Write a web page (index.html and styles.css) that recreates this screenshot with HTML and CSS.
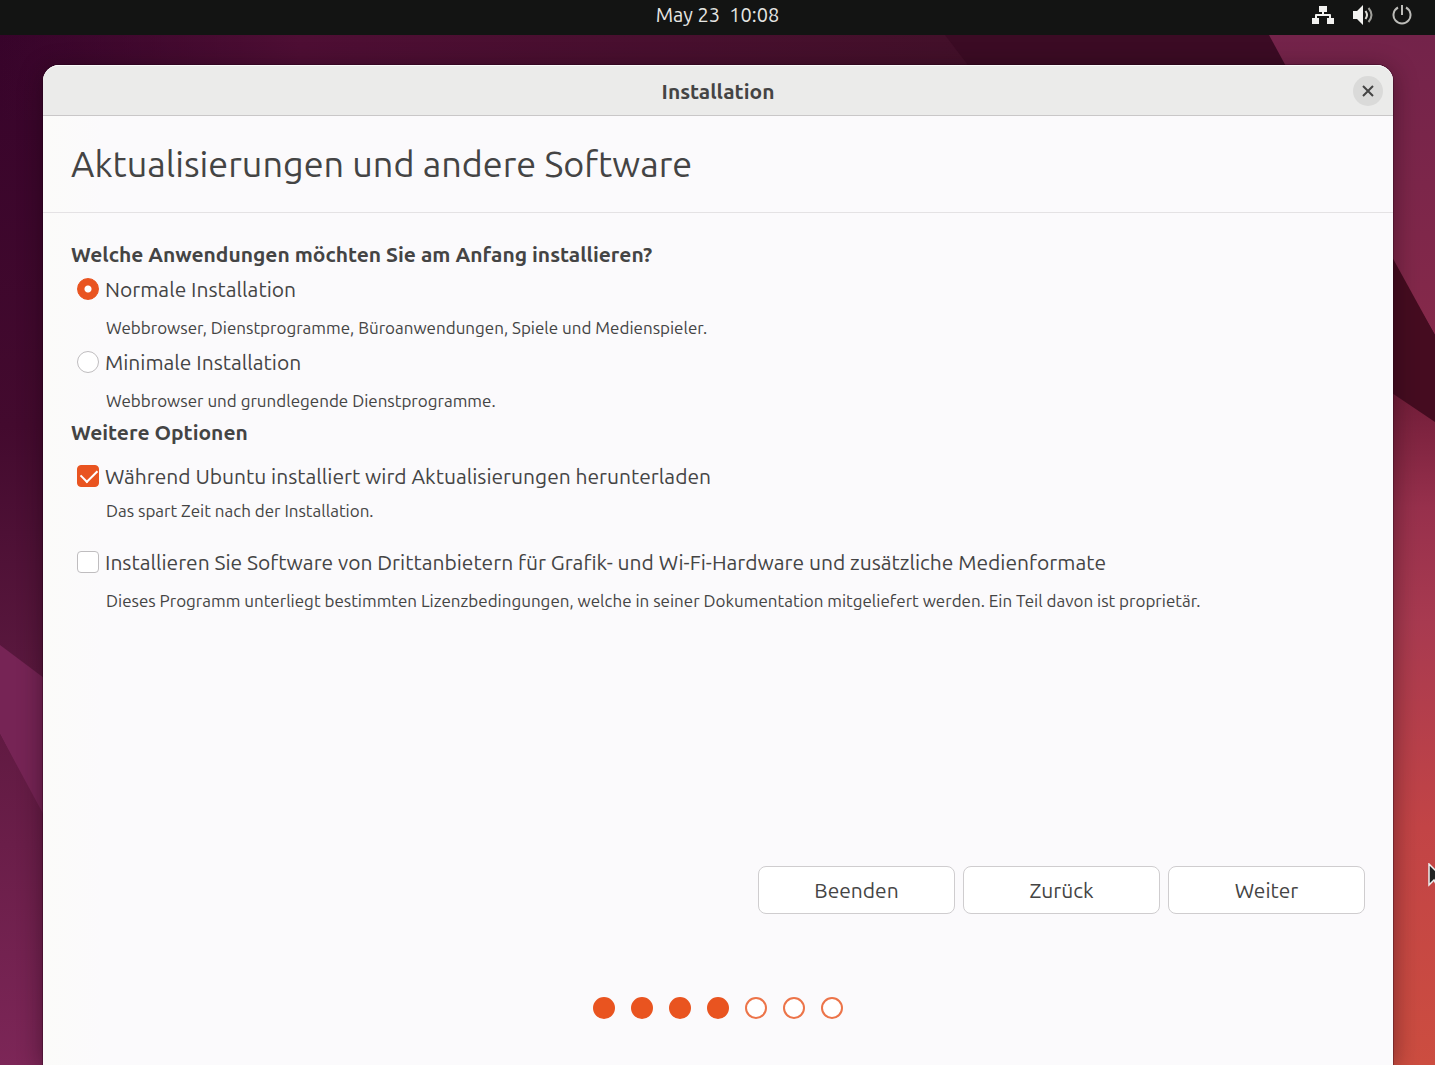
FILE: index.html
```html
<!DOCTYPE html>
<html lang="de">
<head>
<meta charset="utf-8">
<meta name="viewport" content="width=device-width, initial-scale=1">
<title>Installation</title>
<link rel="stylesheet" href="styles.css">
</head>
<body>
<svg class="wallpaper" viewBox="0 0 1435 1065" preserveAspectRatio="none" aria-hidden="true">
  <defs>
    <linearGradient id="base" x1="0" y1="0" x2="0" y2="1"><stop offset="0" stop-color="#36032a"/><stop offset=".4" stop-color="#430a2e"/><stop offset=".63" stop-color="#5a183e"/></linearGradient>
    <linearGradient id="top" x1="0" y1="0" x2="1" y2="0"><stop offset="0" stop-color="#4a0e32" stop-opacity="0"/><stop offset=".3" stop-color="#4e0e34"/><stop offset="1" stop-color="#421029"/></linearGradient>
    <linearGradient id="low" x1="0" y1="0" x2="0" y2="1"><stop offset="0" stop-color="#611a42"/><stop offset="1" stop-color="#7c2657"/></linearGradient>
    <linearGradient id="upper" x1="0" y1="0" x2="0" y2="1"><stop offset="0" stop-color="#73234a"/><stop offset="1" stop-color="#85294a"/></linearGradient>
    <linearGradient id="warm" x1="0" y1="0" x2="0" y2="1"><stop offset="0" stop-color="#6f1c38"/><stop offset=".18" stop-color="#97304c"/><stop offset=".35" stop-color="#a83a50"/><stop offset=".65" stop-color="#c24446"/><stop offset="1" stop-color="#cc4d40"/></linearGradient>
  </defs>
  <rect width="1435" height="1065" fill="url(#base)"/>
  <rect width="1000" height="120" fill="url(#top)"/>
  <path d="M945 35H1300V120H1010Z" fill="#3b0b24"/>
  <path d="M1269 35H1435V335L1380 240Z" fill="url(#upper)"/>
  <path d="M1380 235L1435 335V425L1380 385Z" fill="#450c20"/>
  <path d="M1380 385L1435 422V1065H1380Z" fill="url(#warm)"/>
  <path d="M0 645L60 690V850L0 734Z" fill="#762455"/>
  <path d="M0 734L60 845V1065H0Z" fill="url(#low)"/>
</svg>

<header class="topbar">
  <time class="clock" datetime="05-23T10:08">May 23&nbsp; 10:08</time>
  <div class="status">
    <svg width="22" height="20" viewBox="0 0 22 20" role="img" aria-label="Netzwerk"><path d="M7 1h8v6h-3v2h6q1 0 1 1v3h3v6h-7v-6h2v-2H5v2h2v6H0v-6h3v-3q0-1 1-1h6V7H7z" fill="#f2f2f0"/></svg>
    <svg width="22" height="20" viewBox="0 0 22 20" role="img" aria-label="Lautstärke"><path d="M1 6h4l6-6v20l-6-6H1z" fill="#f2f2f0"/><path d="M13.500 6q3 4 0 8" fill="none" stroke="#deded8" stroke-width="2"/><path d="M16.500 3q6 7 0 14" fill="none" stroke="#a0a09b" stroke-width="2"/></svg>
    <svg width="20" height="20" viewBox="0 0 20 20" role="img" aria-label="Ausschalten"><path d="M6 2.500a8.500 8.500 0 1 0 8 0M10 0v10" fill="none" stroke="#bcbcb8" stroke-width="2"/></svg>
  </div>
</header>

<main class="window">
  <div class="titlebar">
    <span class="title">Installation</span>
    <button class="close" type="button" aria-label="Schließen"><svg width="12" height="12" viewBox="0 0 12 12" aria-hidden="true"><path d="M1 1l10 10M11 1L1 11" stroke="#444" stroke-width="2"/></svg></button>
  </div>
  <h1 class="page-title">Aktualisierungen und andere Software</h1>
  <form class="content">
    <fieldset class="group">
      <legend class="heading">Welche Anwendungen möchten Sie am Anfang installieren?</legend>
      <div class="options">
        <div class="option">
          <label class="choice"><input class="box radio" type="radio" name="mode" checked>Normale Installation</label>
          <p class="hint">Webbrowser, Dienstprogramme, Büroanwendungen, Spiele und Medienspieler.</p>
        </div>
        <div class="option">
          <label class="choice"><input class="box radio" type="radio" name="mode">Minimale Installation</label>
          <p class="hint">Webbrowser und grundlegende Dienstprogramme.</p>
        </div>
      </div>
    </fieldset>
    <fieldset class="group">
      <legend class="heading">Weitere Optionen</legend>
      <div class="options extras">
        <div class="option close-hint">
          <label class="choice"><input class="box check" type="checkbox" checked>Während Ubuntu installiert wird Aktualisierungen herunterladen</label>
          <p class="hint">Das spart Zeit nach der Installation.</p>
        </div>
        <div class="option">
          <label class="choice"><input class="box check" type="checkbox">Installieren Sie Software von Drittanbietern für Grafik- und Wi-Fi-Hardware und zusätzliche Medienformate</label>
          <p class="hint">Dieses Programm unterliegt bestimmten Lizenzbedingungen, welche in seiner Dokumentation mitgeliefert werden. Ein Teil davon ist proprietär.</p>
        </div>
      </div>
    </fieldset>
    <div class="actions">
      <button class="action" type="button">Beenden</button>
      <button class="action" type="button">Zurück</button>
      <button class="action" type="button">Weiter</button>
    </div>
    <div class="steps" role="img" aria-label="Schritt 4 von 7">
      <span class="dot done"></span><span class="dot done"></span><span class="dot done"></span><span class="dot done"></span><span class="dot"></span><span class="dot"></span><span class="dot"></span>
    </div>
  </form>
</main>
<svg class="cursor" width="16" height="26" viewBox="0 0 16 26" aria-hidden="true"><path d="M1 1v21l5-5 4 8 3-2-4-7h7z" fill="#222" stroke="#eee" stroke-width="1.500"/></svg>
</body>
</html>
```
FILE: styles.css
```css
* {
  box-sizing: border-box;
}

body {
  position: relative;
  display: flex;
  flex-direction: column;
  min-height: 100vh;
  margin: 0;
  overflow-x: hidden;
  background: #36032a;
  color: #444;
  font-family: Ubuntu, "Noto Sans", "Open Sans", sans-serif;
  font-size: 21px;
  line-height: 30px;
}

button,
input {
  font: inherit;
  color: inherit;
}

.wallpaper {
  position: absolute;
  inset: 0;
  width: 100%;
  height: 100%;
  z-index: -1;
}

.topbar {
  display: grid;
  grid-template-columns: 1fr auto 1fr;
  align-items: center;
  height: 35px;
  padding: 0 23px 5px;
  background: #131413;
  color: #e6e6e3;
}

.clock {
  grid-column: 2;
  font-size: 20px;
}

.status {
  display: flex;
  justify-content: flex-end;
  align-items: center;
  gap: 18px;
}

.window {
  display: flex;
  flex: 1;
  flex-direction: column;
  margin: 30px 42px 0 43px;
  border-radius: 16px 16px 0 0;
  background: linear-gradient(90deg, #fbfbf9, #fbfafc 60px);
  box-shadow: 0 0 0 1px rgba(30, 0, 20, 0.3), 0 4px 24px rgba(20, 0, 10, 0.45);
}

.titlebar {
  display: grid;
  grid-template-columns: 1fr auto 1fr;
  align-items: center;
  height: 51px;
  padding: 0 10px;
  border-top: 1px solid #fafafa;
  border-bottom: 1px solid #c9c7c8;
  border-radius: 16px 16px 0 0;
  background: #ebebea;
}

.title {
  grid-column: 2;
  font-weight: 700;
}

.close {
  display: flex;
  align-items: center;
  justify-content: center;
  justify-self: end;
  width: 30px;
  height: 30px;
  padding: 0;
  border: 0;
  border-radius: 50%;
  background: #dadad9;
}

.page-title {
  margin: 0;
  padding: 24px 28px;
  border-bottom: 1px solid #e4e2e4;
  font-size: 36px;
  font-weight: 400;
  line-height: 48px;
}

.content {
  display: flex;
  flex: 1;
  flex-direction: column;
  padding: 26px 28px 46px;
}

.group {
  min-width: 0;
  margin: 0;
  padding: 0;
  border: 0;
}

.heading {
  padding: 0;
  font-weight: 700;
}

.options {
  display: flex;
  flex-direction: column;
  gap: 3px;
  padding: 5px 6px 0;
}

.extras {
  gap: 20px;
  padding-top: 14px;
}

.option {
  display: flex;
  flex-direction: column;
  gap: 8px;
}

.close-hint {
  gap: 4px;
}

.choice {
  display: flex;
  align-items: center;
  gap: 6px;
}

.hint {
  margin: 0;
  padding-left: 29px;
  font-size: 17px;
  line-height: 32px;
}

.box {
  flex: none;
  appearance: none;
  width: 22px;
  height: 22px;
  margin: 0;
  border: 1px solid #bfbdbf;
  background: #fff;
}

.radio {
  border-radius: 50%;
}

.check {
  border-radius: 4px;
}

.box:checked {
  border-color: #e95420;
  background: #e95420;
}

.radio:checked {
  background: radial-gradient(circle, #fff 3px, #e95420 4px);
}

.check:checked::before {
  content: "";
  display: block;
  width: 14px;
  height: 8px;
  margin: 4px 3px;
  border: solid #fff;
  border-width: 0 0 2px 2px;
  transform: translateY(-1px) rotate(-45deg);
}

.actions {
  display: flex;
  justify-content: flex-end;
  gap: 8px;
  margin-top: auto;
}

.action {
  width: 197px;
  height: 48px;
  padding: 0;
  border: 1px solid #cfcdcf;
  border-radius: 8px;
  background: #fff;
}

.steps {
  display: flex;
  justify-content: center;
  gap: 16px;
  padding-top: 83px;
}

.dot {
  width: 22px;
  height: 22px;
  border: 2px solid #ec7449;
  border-radius: 50%;
  background: #fff;
}

.done {
  border-color: #e95420;
  background: #e95420;
}

.cursor {
  position: absolute;
  top: 863px;
  left: calc(100% - 7px);
}
```
